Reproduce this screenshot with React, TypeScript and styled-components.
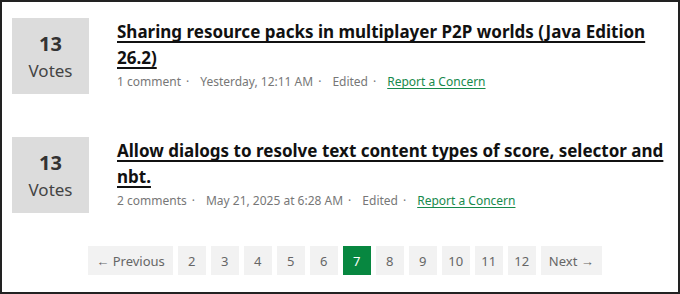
import React from 'react';
import styled, {createGlobalStyle} from 'styled-components';

const Global = createGlobalStyle`
  html, body {
    margin: 0;
    padding: 0;
    background: #fff;
  }
  body {
    font-family: "Noto Sans", "Open Sans", Arial, sans-serif;
  }
`

const Frame = styled.div`
  box-sizing: border-box;
  width: 680px;
  height: 294px;
  border: 2px solid #222;
  padding: 16px 0 0 10px;
  overflow: hidden;
`
const List = styled.div`
  display: flex;
  flex-direction: column;
  gap: 43px;
`
const Item = styled.div`
  display: flex;
  align-items: flex-start;
  gap: 28px;
`
const VoteBox = styled.div`
  flex: 0 0 77px;
  height: 76px;
  background: #dcdcdc;
  display: flex;
  flex-direction: column;
  align-items: center;
  justify-content: center;
  padding-top: 4px;
  box-sizing: border-box;
`
const VoteCount = styled.span`
  font-size: 20px;
  font-weight: 700;
  line-height: 26px;
  color: #333;
`
const VoteLabel = styled.span`
  font-size: 17px;
  line-height: 28px;
  color: #444;
`
const Body = styled.div`
  flex: 1 1 auto;
  min-width: 0;
`
const Title = styled.a`
  display: block;
  font-size: 17px;
  font-weight: 700;
  line-height: 26px;
  color: #111;
  text-decoration: underline;
  text-decoration-thickness: 1.5px;
  text-decoration-skip-ink: none;
  text-underline-offset: 3px;
  margin-top: 1px;
`
const Meta = styled.div`
  display: flex;
  align-items: center;
  font-size: 12px;
  line-height: 20px;
  color: #777;
  margin-top: 1px;
`
const Sep = styled.span`
  margin: 0 11px 0 5px;
`
const Report = styled.a`
  color: #178a4c;
  text-decoration: underline;
  text-decoration-skip-ink: none;
  text-underline-offset: 2px;
`
const Pager = styled.div`
  display: flex;
  justify-content: center;
  gap: 5px;
  margin-top: 33px;
`
const PageBtn = styled.a<{ $active?: boolean; $wide?: boolean }>`
  box-sizing: border-box;
  height: 29px;
  min-width: 28px;
  padding: 0 ${p => (p.$wide ? '8px' : '6px')};
  display: flex;
  align-items: center;
  justify-content: center;
  font-size: 13px;
  color: ${p => (p.$active ? '#fff' : '#666')};
  background: ${p => (p.$active ? '#078740' : '#f2f2f2')};
  text-decoration: none;
`

const posts = [
    {
        votes: 13,
        title: 'Sharing resource packs in multiplayer P2P worlds (Java Edition 26.2)',
        comments: '1 comment',
        date: 'Yesterday, 12:11 AM',
    },
    {
        votes: 13,
        title: 'Allow dialogs to resolve text content types of score, selector and nbt.',
        comments: '2 comments',
        date: 'May 21, 2025 at 6:28 AM',
    },
];

const pages = [2, 3, 4, 5, 6, 7, 8, 9, 10, 11, 12];

export default function App() {
    return (
        <>
            <Global/>
            <Frame>
                <List>
                    {posts.map((p, i) => (
                        <Item key={i}>
                            <VoteBox>
                                <VoteCount>{p.votes}</VoteCount>
                                <VoteLabel>Votes</VoteLabel>
                            </VoteBox>
                            <Body>
                                <Title href="#">{p.title}</Title>
                                <Meta>
                                    <span>{p.comments}</span>
                                    <Sep>·</Sep>
                                    <span>{p.date}</span>
                                    <Sep>·</Sep>
                                    <span>Edited</span>
                                    <Sep>·</Sep>
                                    <Report href="#">Report a Concern</Report>
                                </Meta>
                            </Body>
                        </Item>
                    ))}
                </List>
                <Pager>
                    <PageBtn href="#" $wide>← Previous</PageBtn>
                    {pages.map(n => (
                        <PageBtn key={n} href="#" $active={n === 7}>{n}</PageBtn>
                    ))}
                    <PageBtn href="#" $wide>Next →</PageBtn>
                </Pager>
            </Frame>
        </>
    );
}
